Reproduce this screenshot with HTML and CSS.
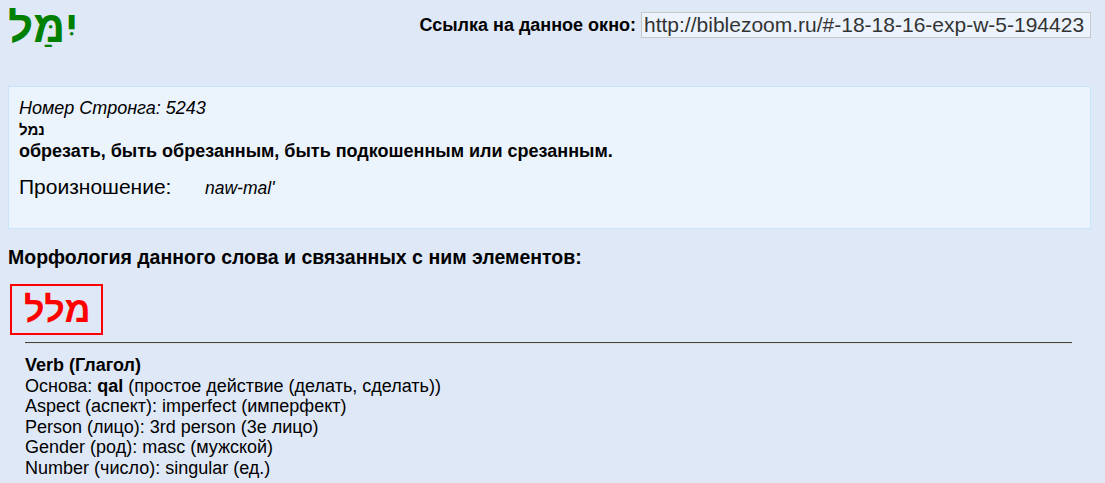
FILE: index.html
```html
<!DOCTYPE html>
<html lang="ru">
<head>
    <meta charset="UTF-8">
    <title>יִמַּל</title>
    <link rel="stylesheet" href="styles.css">
</head>
<body>
    <div class="top-bar">
        <div class="word-title" dir="rtl">יִמַּל</div>
        <div class="link-box">
            <label for="link">Ссылка на данное окно:</label>
            <input type="text" id="link" value="http://biblezoom.ru/#-18-18-16-exp-w-5-194423">
        </div>
    </div>

    <div class="strong-box">
        <div class="strong-num">Номер Стронга: 5243</div>
        <div class="strong-heb" dir="rtl">נמל</div>
        <div class="strong-def">обрезать, быть обрезанным, быть подкошенным или срезанным.</div>
        <div class="pron">
            <span class="pron-label">Произношение:</span>
            <span class="pron-value">naw-mal'</span>
        </div>
    </div>

    <div class="morph-title">Морфология данного слова и связанных с ним элементов:</div>

    <div class="root-word" dir="rtl">מלל</div>
    <hr class="morph-line">

    <div class="morph-info">
        <b>Verb (Глагол)</b><br>
        Основа: <b>qal</b> (простое действие (делать, сделать))<br>
        Aspect (аспект): imperfect (имперфект)<br>
        Person (лицо): 3rd person (3е лицо)<br>
        Gender (род): masc (мужской)<br>
        Number (число): singular (ед.)
    </div>
</body>
</html>
```

FILE: styles.css
```css
body {
    font-family: "Liberation Sans", Arial, sans-serif;
    background-color: #dfe8f6;
    color: #000;
    margin: 8px;
}
.top-bar {
    display: flex;
    justify-content: space-between;
    align-items: flex-start;
    height: 78px;
}
.word-title {
    font-size: 44px;
    font-weight: bold;
    color: #008000;
    line-height: 44px;
    margin-top: -3px;
}
.link-box {
    display: flex;
    align-items: center;
    margin-top: 4px;
    margin-right: 6px;
}
.link-box label {
    font-size: 18px;
    font-weight: bold;
    margin-right: 5px;
}
.link-box input {
    width: 450px;
    height: 26px;
    padding: 0 2px;
    box-sizing: border-box;
    font-family: "Liberation Sans", Arial, sans-serif;
    font-size: 21px;
    color: #333;
    background: #ecf3fc;
    border: 1px solid #c8c8c8;
}
.strong-box {
    background: #ebf3fc;
    border: 1px solid #c7e4fb;
    padding: 10px 10px 0 10px;
    height: 131px;
    margin-right: 6px;
}
.strong-num {
    font-style: italic;
    font-size: 18px;
    line-height: 22px;
}
.strong-heb {
    text-align: left;
    font-size: 15px;
    font-weight: bold;
    line-height: 22px;
}
.strong-def {
    font-size: 18px;
    font-weight: bold;
    line-height: 21px;
}
.pron {
    margin-top: 13px;
    display: flex;
    align-items: baseline;
    line-height: 24px;
}
.pron-label {
    font-size: 21px;
    width: 186px;
}
.pron-value {
    font-style: italic;
    font-size: 17.5px;
}
.morph-title {
    font-size: 19.5px;
    font-weight: bold;
    margin-top: 17px;
    line-height: 22px;
}
.root-word {
    display: inline-block;
    margin: 16px 0 0 2px;
    padding: 0 10px 0 12px;
    border: 2px solid #ff0000;
    color: #ff0000;
    font-size: 36px;
    font-weight: bold;
    line-height: 47px;
}
.morph-line {
    margin: 7px 25px 0 17px;
    border: none;
    border-top: 1px solid #444;
    border-bottom: 1px solid #ddd;
}
.morph-info {
    margin-left: 17px;
    margin-top: 11px;
    font-size: 18px;
    line-height: 20.6px;
}
```
